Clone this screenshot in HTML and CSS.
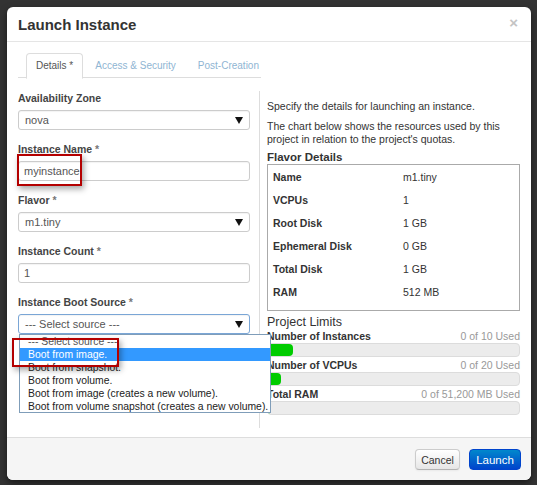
FILE: index.html
```html
<!DOCTYPE html>
<html>
<head>
<meta charset="utf-8">
<link rel="stylesheet" href="styles.css">
</head>
<body>
<div class="modal">
  <div class="modal-header">
    <h3 class="title">Launch Instance</h3>
    <span class="close">×</span>
  </div>
  <div class="modal-body">
    <ul class="tabs">
      <li class="tab active">Details *</li>
      <li class="tab">Access &amp; Security</li>
      <li class="tab">Post-Creation</li>
    </ul>
    <div class="columns">
      <div class="left">
        <div class="field">
          <label class="label">Availability Zone</label>
          <div class="control select">nova<span class="caret"></span></div>
        </div>
        <div class="field">
          <label class="label">Instance Name <span class="req">*</span></label>
          <div class="control">myinstance</div>
        </div>
        <div class="field">
          <label class="label">Flavor <span class="req">*</span></label>
          <div class="control select">m1.tiny<span class="caret"></span></div>
        </div>
        <div class="field">
          <label class="label">Instance Count <span class="req">*</span></label>
          <div class="control">1</div>
        </div>
        <div class="field">
          <label class="label">Instance Boot Source <span class="req">*</span></label>
          <div class="control select focus">--- Select source ---<span class="caret"></span></div>
        </div>
        <div class="dropdown">
          <div class="opt first">--- Select source ---</div>
          <div class="opt hl">Boot from image.</div>
          <div class="opt">Boot from snapshot.</div>
          <div class="opt">Boot from volume.</div>
          <div class="opt">Boot from image (creates a new volume).</div>
          <div class="opt">Boot from volume snapshot (creates a new volume).</div>
        </div>
        <div class="mark mark-name"></div>
        <div class="mark mark-boot"></div>
      </div>
      <div class="right">
        <p class="text">Specify the details for launching an instance.</p>
        <p class="text">The chart below shows the resources used by this project in relation to the project's quotas.</p>
        <h4 class="h-flavor">Flavor Details</h4>
        <div class="flavor">
          <div class="row"><span class="k">Name</span><span class="v">m1.tiny</span></div>
          <div class="row"><span class="k">VCPUs</span><span class="v">1</span></div>
          <div class="row"><span class="k">Root Disk</span><span class="v">1 GB</span></div>
          <div class="row"><span class="k">Ephemeral Disk</span><span class="v">0 GB</span></div>
          <div class="row"><span class="k">Total Disk</span><span class="v">1 GB</span></div>
          <div class="row"><span class="k">RAM</span><span class="v">512 MB</span></div>
        </div>
        <h4 class="h-limits">Project Limits</h4>
        <div class="limit">
          <div class="limit-head"><span class="lk">Number of Instances</span><span class="used">0 of 10 Used</span></div>
          <div class="bar"><div class="fill" style="width:25px"></div></div>
        </div>
        <div class="limit">
          <div class="limit-head"><span class="lk">Number of VCPUs</span><span class="used">0 of 20 Used</span></div>
          <div class="bar"><div class="fill" style="width:13px"></div></div>
        </div>
        <div class="limit">
          <div class="limit-head"><span class="lk">Total RAM</span><span class="used">0 of 51,200 MB Used</span></div>
          <div class="bar"><div class="fill" style="width:2px"></div></div>
        </div>
      </div>
    </div>
  </div>
  <div class="modal-footer">
    <button class="btn">Cancel</button>
    <button class="btn primary">Launch</button>
  </div>
</div>
</body>
</html>
```
FILE: styles.css
```css
html, body {
  margin: 0;
  padding: 0;
}
body {
  width: 537px;
  height: 485px;
  overflow: hidden;
  background: #333333;
  font-family: "Liberation Sans", Arial, sans-serif;
  font-size: 10.5px;
  color: #333;
}
.modal {
  margin: 7px 0 0 7px;
  width: 524px;
  height: 473px;
  background: #fff;
  border-radius: 6px;
  box-shadow: 0 3px 7px rgba(0,0,0,0.5);
  display: flex;
  flex-direction: column;
  position: relative;
}
.modal-header {
  height: 34px;
  border-bottom: 1px solid #e5e5e5;
  display: flex;
  align-items: center;
  justify-content: space-between;
  padding: 0 11px;
}
.title {
  margin: 0;
  font-size: 15px;
  font-weight: bold;
  color: #333;
  padding-top: 1px;
}
.close {
  font-size: 15px;
  font-weight: bold;
  color: #c4c4c4;
  margin-right: 2px;
  margin-top: -4px;
}
.modal-body {
  flex: 1;
  padding: 11px 11px 0;
}
.tabs {
  list-style: none;
  margin: 0;
  padding: 0 0 0 8px;
  width: 243px;
  box-sizing: border-box;
  height: 25px;
  border-bottom: 1px solid #ddd;
  display: flex;
  gap: 2px;
  white-space: nowrap;
}
.tab {
  flex-shrink: 0;
  height: 24px;
  line-height: 24px;
  padding: 0 9px;
  font-size: 10px;
  color: #8fb5d3;
  border: 1px solid transparent;
  border-radius: 4px 4px 0 0;
}
.tab.active {
  color: #555;
  border-color: #ddd;
  border-bottom-color: #fff;
  background: #fff;
}
.columns {
  display: flex;
  margin-top: 13px;
}
.left {
  width: 232px;
  position: relative;
}
.field {
  margin-bottom: 12px;
}
.label {
  display: block;
  font-weight: bold;
  color: #444;
  font-size: 10.5px;
  line-height: 14px;
  margin-bottom: 5px;
}
.req {
  color: #777;
}
.control {
  box-sizing: border-box;
  height: 20px;
  border: 1px solid #ccc;
  border-radius: 3px;
  padding-left: 5px;
  line-height: 18px;
  font-size: 11px;
  color: #555;
  position: relative;
  box-shadow: inset 0 1px 1px rgba(0,0,0,0.05);
}
.control.select {
  padding-left: 6px;
}
.control.focus {
  border-color: #7aa6d6;
  color: #555;
}
.caret {
  position: absolute;
  right: 6px;
  top: 6px;
  width: 0;
  height: 0;
  border-left: 4px solid transparent;
  border-right: 4px solid transparent;
  border-top: 7px solid #111;
}
.dropdown {
  position: absolute;
  left: 1px;
  top: 243px;
  width: 252px;
  height: 79px;
  box-sizing: border-box;
  border: 1px solid #7f9db9;
  background: #fff;
  z-index: 5;
  overflow: hidden;
}
.opt {
  height: 13px;
  line-height: 13px;
  padding-left: 8px;
  font-size: 10.4px;
  color: #222;
  white-space: nowrap;
}
.opt.first {
  color: #555;
}
.opt.hl {
  background: #3399ff;
  color: #fff;
}
.mark {
  position: absolute;
  border: 2px solid #b40000;
  box-sizing: border-box;
  box-shadow: 2px 3px 6px rgba(0,0,0,0.35);
  z-index: 6;
}
.mark-name {
  left: -1px;
  top: 63px;
  width: 65px;
  height: 32px;
}
.mark-boot {
  left: -6px;
  top: 247px;
  width: 107px;
  height: 29px;
}
.right {
  margin-left: 9px;
  border-left: 1px solid #ddd;
  padding: 9px 0 11px 7px;
  width: 253px;
}
.text {
  margin: 0 0 7px;
  line-height: 13px;
  font-size: 10.5px;
  color: #333;
}
.h-flavor {
  margin: -3px 0 0;
  font-size: 11.5px;
  font-weight: bold;
  line-height: 14px;
  color: #333;
}
.flavor {
  border: 1px solid #aaa;
  padding: 1px 0 5px;
  height: 139px;
}
.row {
  display: flex;
  height: 23px;
  line-height: 23px;
  padding-left: 5px;
}
.k {
  width: 130px;
  font-weight: bold;
  color: #333;
}
.v {
  color: #333;
}
.h-limits {
  margin: 3px 0 0;
  font-size: 12.5px;
  font-weight: normal;
  line-height: 16px;
  color: #333;
}
.limit {
  margin-bottom: 2px;
}
.limit-head {
  display: flex;
  justify-content: space-between;
  line-height: 13px;
}
.lk {
  font-weight: bold;
  color: #333;
}
.used {
  color: #999;
}
.bar {
  height: 14px;
  box-sizing: border-box;
  background: #ececec;
  border: 1px solid #dcdcdc;
  border-radius: 4px;
  overflow: hidden;
}
.fill {
  height: 100%;
  background: #00cc00;
  border-radius: 0 4px 4px 0;
}
.modal-footer {
  height: 43px;
  border-top: 1px solid #ddd;
  background: #f5f5f5;
  border-radius: 0 0 6px 6px;
  display: flex;
  justify-content: flex-end;
  align-items: flex-start;
  gap: 9px;
  padding: 11px 10px 0 0;
  box-sizing: border-box;
}
.btn {
  height: 21px;
  font-family: "Liberation Sans", Arial, sans-serif;
  font-size: 10.5px;
  border-radius: 4px;
  padding: 0;
  cursor: default;
}
.btn:first-child {
  width: 45px;
  color: #333;
  border: 1px solid #ccc;
  border-bottom-color: #b3b3b3;
  background: linear-gradient(#ffffff, #e6e6e6);
  box-shadow: inset 0 1px 0 rgba(255,255,255,0.2), 0 1px 2px rgba(0,0,0,0.05);
}
.btn.primary {
  width: 52px;
  color: #fff;
  font-size: 11.5px;
  border: 1px solid #0044cc;
  background: linear-gradient(#0088cc, #0044cc);
}
```
